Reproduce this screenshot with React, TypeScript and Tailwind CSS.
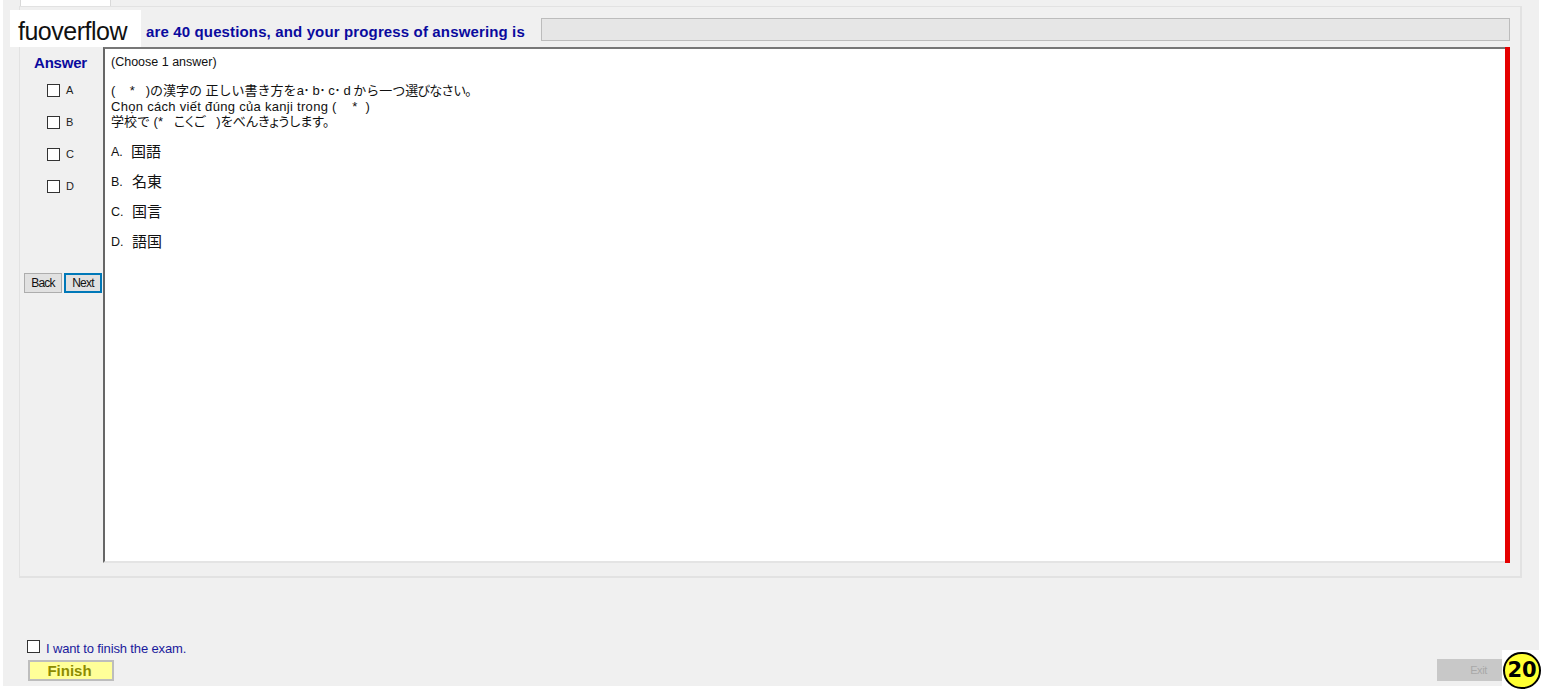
const cjk = "font-['Liberation_Sans','Noto_Sans_CJK_JP',sans-serif]";

const answers = ["A", "B", "C", "D"];
const options = [
  { key: "A.", text: "国語", gap: "gap-[8px]" },
  { key: "B.", text: "名東", gap: "gap-[9px]" },
  { key: "C.", text: "国言", gap: "gap-[9px]" },
  { key: "D.", text: "語国", gap: "gap-[9px]" },
];

function Box({ className = "" }: { className?: string }) {
  return <span className={`block w-[13px] h-[13px] bg-white border border-[#333] ${className}`} />;
}

export default function App() {
  return (
    <div className={`relative w-[1542px] h-[690px] bg-white overflow-hidden ${cjk}`}>
      <div className="ml-[3px] w-[1536px] h-[686px] bg-[#f0f0f0] flex flex-col">
        <div className="h-[6px] pl-[17px]">
          <div className="w-[91px] h-[6px] bg-white border-x border-[#d9d9d9]" />
        </div>

        <div className="ml-[16px] w-[1503px] h-[572px] border border-[#e2e2e2] border-b-2 border-r-2 bg-[#f0f0f0] flex flex-col">
          <div className="h-[40px] flex items-start pt-[11px] pl-[126px]">
            <span className="w-[395px] text-[15px] leading-[28px] font-bold text-[#0a0a9e] tracking-[0.14px] whitespace-nowrap">
              are 40 questions, and your progress of answering is
            </span>
            <div className="w-[969px] h-[23px] bg-[#e6e6e6] border border-[#bcbcbc]" />
          </div>

          <div className="flex h-[516px] pr-[10px]">
            <div className="w-[83px] shrink-0 flex flex-col">
              <div className="h-[30px] pt-[7px] pl-[14px] text-[15px] leading-[18px] font-bold text-[#0a0a9e] tracking-[-0.2px]">
                Answer
              </div>
              <div className="flex flex-col gap-[19px] pl-[27px] pt-[7px]">
                {answers.map((a) => (
                  <div key={a} className="flex items-center gap-[6px] h-[13px]">
                    <Box />
                    <span className="text-[11px] leading-[13px] -mt-[1px] text-[#222]">{a}</span>
                  </div>
                ))}
              </div>
              <div className="flex gap-[2px] pl-[4px] mt-[80px]">
                <button className="w-[38px] h-[20px] bg-[#e1e1e1] border border-[#adadad] text-[12px] leading-[16px] tracking-[-0.8px] text-[#111]">
                  Back
                </button>
                <button className="w-[38px] h-[20px] bg-[#e1e1e1] border-2 border-[#0078b8] text-[12px] leading-[14px] tracking-[-0.8px] text-[#111]">
                  Next
                </button>
              </div>
            </div>

            <div className="flex-1 bg-white border-l-2 border-t-2 border-b-2 border-l-[#666] border-t-[#777] border-b-[#e4e4e4] pl-[6px] pt-[6px] text-[#111]">
              <p className="text-[12.5px] leading-[15px] h-[28px]">(Choose 1 answer)</p>
              <p className="text-[13px] leading-[16px] h-[16px] whitespace-pre">
                {"(    *   )の漢字の 正しい書き方を"}
                <span className="tracking-[-0.5px]">{"a･ b･ c･ d "}</span>
                {"から一つ"}
                <span className="tracking-[-1px]">{"選びなさい。"}</span>
              </p>
              <p className="text-[13px] leading-[15px] h-[15px] tracking-[0.3px] whitespace-pre">
                {"Chọn cách viết đúng của kanji trong (    *  )"}
              </p>
              <p className="text-[13px] leading-[15px] h-[15px] whitespace-pre">
                {"学校で (*   "}
                <span className="[font-feature-settings:'palt']">こくご</span>
                {"   )"}
                <span className="[font-feature-settings:'palt']">をべんきょうします。</span>
              </p>
              <div className="pt-[15px] flex flex-col gap-[14px]">
                {options.map((o) => (
                  <div key={o.key} className={`flex items-center ${o.gap} h-[16px]`}>
                    <span className="text-[12.5px] w-[12px]">{o.key}</span>
                    <span className="text-[15px] leading-[16px]">{o.text}</span>
                  </div>
                ))}
              </div>
            </div>
            <div className="w-[5px] bg-[#e50000] shrink-0" />
          </div>
        </div>

        <div className="mt-auto pl-[24px] pb-[5px] pr-[37px] flex items-end justify-between">
          <div className="flex flex-col gap-[6px]">
            <div className="flex items-center gap-[6px] h-[15px]">
              <Box />
              <span className="text-[13px] leading-[15px] tracking-[-0.14px] text-[#1a1a9c] mt-[4px]">I want to finish the exam.</span>
            </div>
            <button className="ml-[1px] w-[86px] h-[21px] bg-[#ffff99] border-2 border-[#bdbdbd] text-[15px] leading-[16px] font-bold pr-[3px] text-[#8c8c00]">
              Finish
            </button>
          </div>
          <button className="w-[65px] h-[22px] bg-[#c8c8c8] text-[11px] text-[#a8a8a8] tracking-[-0.4px] pl-[18px] pt-[1px]">Exit</button>
        </div>
      </div>

      <div className="absolute left-[10px] top-[10px] w-[131px] h-[37px] bg-white pl-[8px] pt-[6px] text-[25px] leading-[30px] tracking-[-0.5px] text-[#111]">
        fuoverflow
      </div>
      <div className="absolute left-[1502px] top-[650px] w-[40px] h-[40px] bg-white pl-[1px] pt-[2px]">
        <div className="w-[38px] h-[37px] rounded-full bg-[#ffff33] border-2 border-black flex items-center justify-center text-[21px] font-bold text-black font-['DejaVu_Sans',sans-serif]">
          20
        </div>
      </div>
    </div>
  );
}
